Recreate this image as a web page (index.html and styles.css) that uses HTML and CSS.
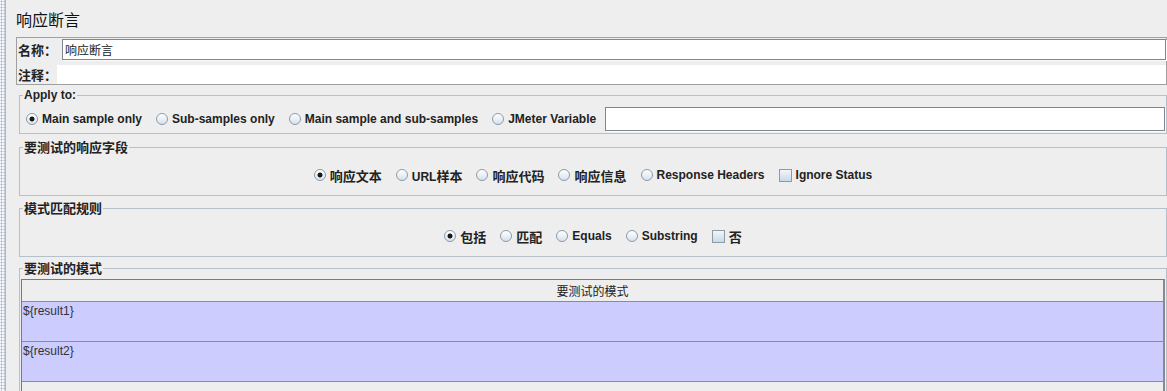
FILE: index.html
```html
<!DOCTYPE html>
<html lang="zh-CN">
<head>
    <meta charset="UTF-8">
    <meta name="viewport" content="width=device-width, initial-scale=1.0">
    <title>响应断言</title>
    <link rel="stylesheet" href="styles.css">
</head>
<body>
    <div class="splitter"></div>
    <div class="panel">
        <h1 class="title">响应断言</h1>

        <div class="namebox">
            <div class="name-row">
                <span class="label label-name cn">名称：</span>
                <div class="textfield name-field">响应断言</div>
            </div>
            <div class="name-row comment-row">
                <span class="label label-comment cn">注释：</span>
                <div class="comment"></div>
            </div>
        </div>

        <fieldset class="group apply">
            <legend>Apply to:</legend>
            <div class="options apply-row">
                <span class="opt"><span class="radio on"></span><span>Main sample only</span></span>
                <span class="opt"><span class="radio"></span><span>Sub-samples only</span></span>
                <span class="opt"><span class="radio"></span><span>Main sample and sub-samples</span></span>
                <span class="opt"><span class="radio"></span><span>JMeter Variable</span></span>
                <div class="textfield var-field"></div>
            </div>
        </fieldset>

        <fieldset class="group fields">
            <legend class="cn">要测试的响应字段</legend>
            <div class="options centered">
                <span class="opt"><span class="radio on"></span><span class="cn">响应文本</span></span>
                <span class="opt"><span class="radio"></span><span>URL<span class="cn">样本</span></span></span>
                <span class="opt"><span class="radio"></span><span class="cn">响应代码</span></span>
                <span class="opt"><span class="radio"></span><span class="cn">响应信息</span></span>
                <span class="opt"><span class="radio"></span><span>Response Headers</span></span>
                <span class="opt"><span class="check"></span><span>Ignore Status</span></span>
            </div>
        </fieldset>

        <fieldset class="group rules">
            <legend class="cn">模式匹配规则</legend>
            <div class="options centered">
                <span class="opt"><span class="radio on"></span><span class="cn">包括</span></span>
                <span class="opt"><span class="radio"></span><span class="cn">匹配</span></span>
                <span class="opt"><span class="radio"></span><span>Equals</span></span>
                <span class="opt"><span class="radio"></span><span>Substring</span></span>
                <span class="opt"><span class="check"></span><span class="cn">否</span></span>
            </div>
        </fieldset>

        <fieldset class="group patterns">
            <legend class="cn">要测试的模式</legend>
            <div class="table-wrap">
                <table class="pattern-table">
                    <thead>
                        <tr><th>要测试的模式</th></tr>
                    </thead>
                    <tbody>
                        <tr><td>${result1}</td></tr>
                        <tr><td>${result2}</td></tr>
                    </tbody>
                </table>
            </div>
        </fieldset>
    </div>
</body>
</html>
```

FILE: styles.css
```css
html, body {
    margin: 0;
    height: 100%;
}

body {
    display: flex;
    background: #eeeeee;
    font-family: "Liberation Sans", "Noto Sans CJK SC", sans-serif;
    font-size: 12px;
    color: #222;
    overflow: hidden;
}

/* dotted splitter on the far left */
.splitter {
    flex: none;
    width: 5px;
    background-color: #f4f6fa;
    background-image: radial-gradient(circle, #a9b6cc 0.9px, transparent 1.1px);
    background-size: 3px 3px;
    border-right: 1px solid #b8b8b8;
}

.panel {
    flex: none;
    width: 1151px;
    margin-left: 10px;
}

.cn {
    font-family: "Noto Sans CJK SC", sans-serif;
    font-size: 13px;
}

.title {
    margin: 0 0 8px 0;
    padding-top: 9px;
    height: 20px;
    line-height: 20px;
    font-family: "Noto Sans CJK SC", sans-serif;
    font-size: 16px;
    font-weight: normal;
    color: #111;
}

/* name / comment box */
.namebox {
    border: 1px solid #a0a0a0;
    padding: 1px 0 0 1px;
}

.name-row {
    display: flex;
    align-items: center;
    height: 21px;
}

.comment-row {
    height: 19px;
    margin-top: 5px;
}

.label {
    flex: none;
    font-weight: bold;
    line-height: 14px;
}

.label-name {
    width: 44px;
}

.label-comment {
    width: 39px;
}

.textfield {
    box-sizing: border-box;
    background: #fff;
    border: 1px solid #7f868d;
    box-shadow: 1px 1px 0 #fbfbfb;
}

.name-field {
    flex: 1;
    height: 21px;
    padding-left: 2px;
    line-height: 19px;
    font-family: "Noto Sans CJK SC", sans-serif;
    font-size: 12px;
}

.comment {
    flex: 1;
    height: 19px;
    background: #fff;
}

/* titled groups */
.group {
    margin: 0 0 0 3px;
    padding: 0;
    min-width: 0;
    border: 1px solid #b6c0ca;
}

.group legend {
    margin-left: 3px;
    padding: 0 1px;
    height: 14px;
    line-height: 14px;
    font-weight: bold;
    color: #222;
}

.apply {
    margin-top: 3px;
}

.fields {
    margin-top: 6px;
}

.rules {
    margin-top: 5px;
}

.patterns {
    margin-top: 4px;
    padding-top: 4px;
    border-bottom: none;
}

.options {
    display: flex;
    align-items: center;
    font-weight: bold;
    white-space: nowrap;
}

.apply-row {
    height: 24px;
    padding: 5px 1px 2px 6px;
}

.centered {
    justify-content: center;
    height: 20px;
    padding: 11px 0 10px 0;
}

.opt {
    display: inline-flex;
    align-items: center;
    gap: 4px;
    margin-right: 14px;
}

.opt:last-child {
    margin-right: 0;
}

.apply-row .opt:nth-child(4) {
    margin-right: 9px;
}

.var-field {
    flex: 1;
    height: 24px;
}

.radio {
    flex: none;
    box-sizing: border-box;
    width: 12px;
    height: 12px;
    border-radius: 50%;
    border: 1px solid #8e9aa6;
    background: linear-gradient(#ffffff, #d6e2ee);
}

.radio.on {
    background: radial-gradient(circle, #1a1a1a 2.2px, transparent 2.8px), linear-gradient(#ffffff, #d6e2ee);
}

.check {
    flex: none;
    box-sizing: border-box;
    width: 13px;
    height: 13px;
    border: 1px solid #8e9aa6;
    background: linear-gradient(#f2f6fa, #c9d9e9);
}

/* pattern table */
.table-wrap {
    height: 111px;
    margin: 0 1px;
    border-top: 1px solid #7a7a7a;
    border-left: 1px solid #7a7a7a;
    border-right: 2px solid #8a8a8a;
}

.pattern-table {
    width: 100%;
    border-collapse: collapse;
}

.pattern-table th {
    height: 21px;
    padding: 0;
    font-family: "Noto Sans CJK SC", sans-serif;
    font-size: 12px;
    font-weight: normal;
    color: #222;
    background: #eeeeee;
    border-bottom: 1px solid #8a8a9a;
}

.pattern-table td {
    height: 40px;
    padding: 2px 0 0 1px;
    vertical-align: top;
    box-sizing: border-box;
    line-height: 14px;
    color: #333;
    background: #ccccff;
    border-bottom: 1px solid #8888a8;
}
```
